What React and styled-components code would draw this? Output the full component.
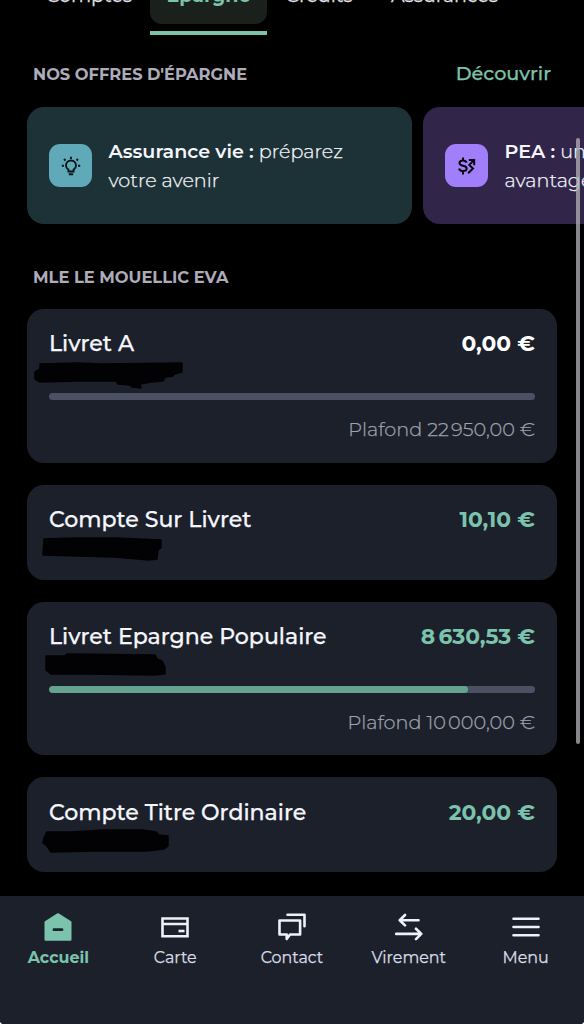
import React from "react";
import styled, { createGlobalStyle } from "styled-components";

const GlobalStyle = createGlobalStyle`
  * { box-sizing: border-box; }
  body { margin: 0; background: #fff; }
`;

const mint = "#7cc3ad";
const panel = "#1b202b";

const Screen = styled.div`
  position: relative;
  width: 584px;
  height: 1024px;
  overflow: hidden;
  display: flex;
  flex-direction: column;
  background: #000;
  border-radius: 0 0 4px 4px;
  color: #f5f6fb;
  font-family: Montserrat, Inter, "Liberation Sans", sans-serif;
`;

const Text = styled.span`
  display: inline-block;
  white-space: pre;
  margin: 0;
  font-size: ${(p) => p.$size}px;
  font-weight: ${(p) => p.$weight || 400};
  color: ${(p) => p.$color || "inherit"};
  -webkit-text-stroke: ${(p) => ((p.$weight || 400) < 600 ? 0.25 : 0)}px currentColor;
`;

const ThinSpace = styled.span`
  word-spacing: -0.14em;
`;

const Tabs = styled.nav`
  height: 35px;
  flex: none;
  display: flex;
  align-items: flex-end;
  padding-left: 28px;
`;

const Tab = styled.div`
  width: ${(p) => p.$width}px;
  height: 60px;
  flex: none;
  padding-bottom: 7px;
  border-bottom: 4px solid ${(p) => (p.$active ? mint : "transparent")};
`;

const TabPill = styled.div`
  height: 49px;
  border-radius: 12px;
  padding-left: ${(p) => p.$inset}px;
  line-height: 41px;
  background: ${(p) => (p.$active ? "#1a211c" : "transparent")};
`;

const SectionHead = styled.header`
  flex: none;
  display: flex;
  align-items: baseline;
  justify-content: space-between;
  padding: 0 33px;
  line-height: 27px;
  height: 28px;
  margin-top: ${(p) => p.$top}px;
`;

const Offers = styled.div`
  flex: none;
  display: flex;
  gap: 11px;
  margin-top: 19px;
  padding-left: 27px;
  overflow: hidden;
`;

const Offer = styled.article`
  flex: none;
  width: 385px;
  height: 117px;
  display: flex;
  align-items: center;
  gap: 16.5px;
  padding-left: 22px;
  border-radius: 17px;
  background: ${(p) => p.$bg};
`;

const OfferIcon = styled.div`
  width: 43px;
  height: 43.5px;
  border-radius: 11px;
  display: grid;
  place-items: center;
  background: ${(p) => p.$bg};
`;

const OfferText = styled.p`
  margin: 0;
  line-height: 29px;
`;

const OfferLine = styled.span`
  display: flex;
  gap: 5px;
`;

const Accounts = styled.main`
  flex: none;
  display: flex;
  flex-direction: column;
  gap: 22px;
  padding: 0 27px;
  margin-top: 17px;
`;

const Account = styled.article`
  position: relative;
  height: ${(p) => (p.$tall ? 153.7 : 95)}px;
  border-radius: 17px;
  padding: 19.4px 22px 0;
  background: ${panel};
`;

const AccountRow = styled.div`
  display: flex;
  align-items: baseline;
  justify-content: space-between;
  height: 30px;
  line-height: 30px;
`;

const Track = styled.div`
  height: 7px;
  margin-top: 34.6px;
  border-radius: 4px;
  background: #4b5163;
  overflow: hidden;
`;

const Fill = styled.div`
  height: 100%;
  border-radius: 4px;
  background: #63a38f;
`;

const Ceiling = styled.div`
  display: flex;
  justify-content: flex-end;
  margin-top: 14.2px;
  line-height: 30px;
`;

const Scribble = styled.svg`
  position: absolute;
  left: 0;
  top: 50px;
  width: 170px;
  height: 34px;
  fill: #020204;
  stroke: #020204;
  stroke-width: 1.5;
  stroke-linejoin: round;
`;

const ScrollThumb = styled.div`
  position: absolute;
  right: 4px;
  top: 137.5px;
  width: 4px;
  height: 606px;
  border-radius: 2px;
  background: rgba(175, 172, 178, 0.78);
`;

const BottomBar = styled.nav`
  flex: 1;
  display: flex;
  margin-top: 24px;
  padding-top: 16.4px;
  background: ${panel};
`;

const BarItem = styled.div`
  flex: 1 1 0;
  display: flex;
  flex-direction: column;
  align-items: center;
  line-height: 24px;
  gap: 5px;
`;

const BarIcon = styled.svg`
  width: 28px;
  height: 28px;
  fill: none;
  stroke: #f0f0fa;
  stroke-width: 2.6;
  stroke-linecap: round;
  stroke-linejoin: round;
`;

const tabs = [
  { label: "Comptes", width: 122, inset: 18 },
  { label: "Epargne", width: 117, inset: 16.5, active: true },
  { label: "Crédits", width: 105, inset: 18.5 },
  { label: "Assurances", width: 140, inset: 19 },
];

const accounts = [
  {
    name: "Livret A", amount: ["0,00 €"], ceiling: ["22", "950,00 €"], fill: 0,
    scribble: "M13 5 L50 4 75 5 155 4 155 13 147 15 146 17 138 18 136 22 124 23 113 25 114 29 105 28 103 26 91 25 89 22 50 22 13 23 8 20 8 13 13 10Z",
  },
  {
    name: "Compte Sur Livret", amount: ["10,10 €"], positive: true,
    scribble: "M17 4 L48 3 88 3 134 5 134 13 131 15 130 24 122 25 88 22 16 20Z",
  },
  {
    name: "Livret Epargne Populaire", amount: ["8", "630,53 €"], positive: true, ceiling: ["10", "000,00 €"], fill: 86.3,
    scribble: "M19 4 L38 4 40 2 128 3 130 7 135 9 138 15 138 22 126 23 60 22 24 22 19 18Z",
  },
  {
    name: "Compte Titre Ordinaire", amount: ["20,00 €"], positive: true,
    scribble: "M20 5 L45 5 75 3 115 3 129 5 132 8 141 9 141 19 137 22 120 24 65 24 24 25 20 19 16 16 17 11Z",
  },
];

function Grouped({ parts }) {
  return parts.map((part, i) => (
    <React.Fragment key={part}>
      {i > 0 && <ThinSpace> </ThinSpace>}
      {part}
    </React.Fragment>
  ));
}

function BulbIcon() {
  return (
    <svg width="20" height="20" viewBox="0 0 20 20" fill="none" stroke="#071519" strokeWidth="1.9">
      <path d="M7.4 15.5V13.6C5.7 12.6 5 11.2 5 9.5a5 5 0 0 1 10 0c0 1.7-.7 3.1-2.4 4.1v1.9zM7.8 18.3h4.4M10 .8v2.1M.8 9.7h2.2M17 9.7h2.2M3 3l1.5 1.5M17 3l-1.5 1.5" />
    </svg>
  );
}

function DollarTrendIcon() {
  return (
    <svg width="20" height="20" viewBox="0 0 20 20" fill="none" stroke="#09050f" strokeWidth="2">
      <path d="M9.6 6.6C9 5 7.8 4.4 5.9 4.4c-2 0-3.4.9-3.4 2.6C2.5 8.8 4 9.3 6 9.7c2.1.4 3.7 1 3.7 2.8 0 1.7-1.5 2.6-3.6 2.6-2.2 0-3.6-1-4-2.6M6 1.5v3M6 15v3.5" />
      <path d="M11.8 4h5.4v5.2M16.9 4.3l-4.6 4.6 3.7 3.6-4.9 4.8" />
    </svg>
  );
}

const barItems = [
  {
    label: "Accueil", active: true,
    icon: <><path d="M14 1.2 26.5 9v17.8h-25V9z" fill={mint} stroke={mint} strokeWidth="2" /><path d="M10 16.7h8" stroke={panel} strokeWidth="2.8" /></>,
  },
  {
    label: "Carte",
    icon: <><path d="M1.5 5.5h25v17.8h-25zM2 11h24" strokeLinejoin="miter" strokeLinecap="butt" /><path d="M17.5 18h6" strokeLinecap="butt" /></>,
  },
  {
    label: "Contact",
    icon: <><path d="M1.5 7.5h20.6v14H12L8.7 26v-4.5H1.5z" /><path d="M9.5 1.7h17v11.5" /></>,
  },
  {
    label: "Virement",
    icon: <path d="M23.5 7.2H5.5M10 2 4.7 7.2 10 12.4M1 20.9h25M21 15.7l5.3 5.2-5.3 5.2" />,
  },
  { label: "Menu", icon: <path d="M1.5 5.7h25M1.5 14h25M1.5 22.3h25" /> },
];

export default function App() {
  return (
    <Screen>
      <GlobalStyle />
      <Tabs>
        {tabs.map((t) => (
          <Tab key={t.label} $width={t.width} $active={t.active}>
            <TabPill $inset={t.inset} $active={t.active}>
              <Text $size={19} $weight={t.active ? 700 : 400} $color={t.active ? mint : "#e4e4ea"}>{t.label}</Text>
            </TabPill>
          </Tab>
        ))}
      </Tabs>

      <SectionHead $top={25}>
        <Text as="h2" $size={16.25} $weight={700} $color="#adacb9">NOS OFFRES D'ÉPARGNE</Text>
        <Text $size={19.2} $weight={500} $color={mint}>Découvrir</Text>
      </SectionHead>

      <Offers>
        <Offer $bg="#1d3237">
          <OfferIcon $bg="#5fa9b9"><BulbIcon /></OfferIcon>
          <OfferText>
            <OfferLine>
              <Text $size={19.1} $weight={600}>Assurance vie :</Text>
              <Text $size={19.2} $weight={300}>préparez</Text>
            </OfferLine>
            <OfferLine><Text $size={19.2} $weight={300}>votre avenir</Text></OfferLine>
          </OfferText>
        </Offer>
        <Offer $bg="#31264a">
          <OfferIcon $bg="#a17ffa"><DollarTrendIcon /></OfferIcon>
          <OfferText>
            <OfferLine>
              <Text $size={19.1} $weight={600}>PEA :</Text>
              <Text $size={19.2} $weight={300}>une épargne</Text>
            </OfferLine>
            <OfferLine><Text $size={19.2} $weight={300}>avantageuse</Text></OfferLine>
          </OfferText>
        </Offer>
      </Offers>

      <SectionHead $top={40}>
        <Text as="h2" $size={16.3} $weight={700} $color="#adacb9">MLE LE MOUELLIC EVA</Text>
      </SectionHead>

      <Accounts>
        {accounts.map((a) => (
          <Account key={a.name} $tall={!!a.ceiling}>
            <AccountRow>
              <Text $size={22.05} $weight={500}>{a.name}</Text>
              <Text $size={21.8} $weight={700} $color={a.positive ? mint : "#fff"}><Grouped parts={a.amount} /></Text>
            </AccountRow>
            {a.ceiling && (
              <>
                <Track><Fill style={{ width: `${a.fill}%` }} /></Track>
                <Ceiling>
                  <Text $size={19.25} $weight={300} $color="#a0a2af">Plafond <Grouped parts={a.ceiling} /></Text>
                </Ceiling>
              </>
            )}
            <Scribble viewBox="0 0 170 34"><path d={a.scribble} /></Scribble>
          </Account>
        ))}
      </Accounts>

      <BottomBar>
        {barItems.map((b) => (
          <BarItem key={b.label}>
            <BarIcon viewBox="0 0 28 28">{b.icon}</BarIcon>
            <Text $size={15.9} $weight={b.active ? 700 : 400} $color={b.active ? mint : "#dcdce6"}>{b.label}</Text>
          </BarItem>
        ))}
      </BottomBar>
      <ScrollThumb />
    </Screen>
  );
}
